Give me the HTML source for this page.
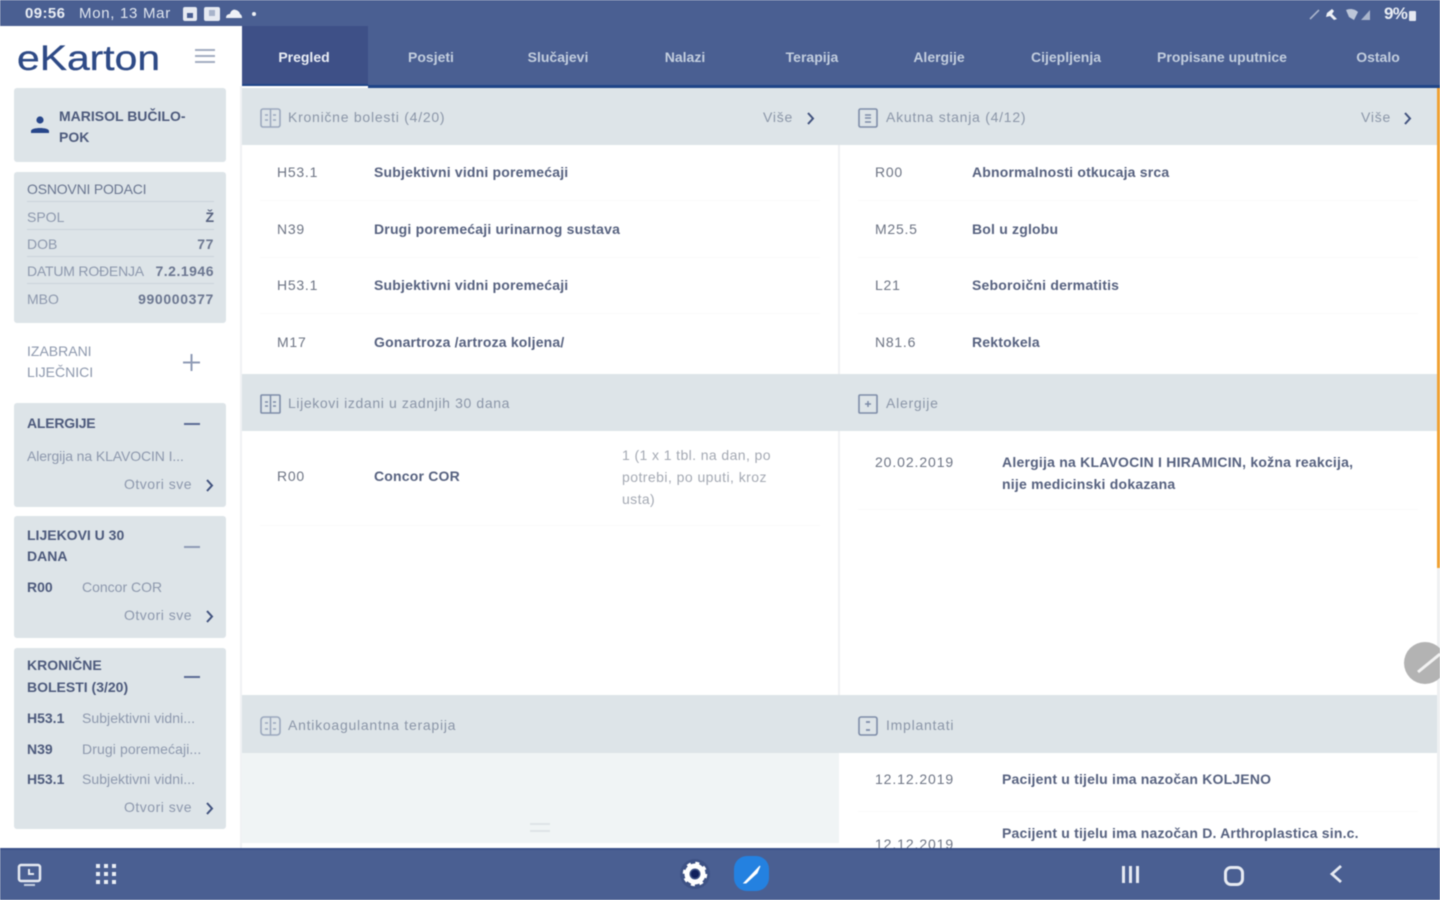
<!DOCTYPE html>
<html lang="hr"><head><meta charset="utf-8"><title>eKarton</title>
<style>
html,body{margin:0;padding:0;width:1440px;height:900px;overflow:hidden;background:#fff}
#p{position:relative;width:1440px;height:900px;overflow:hidden;font-family:"Liberation Sans",sans-serif;filter:blur(.65px);color:#3f4c6e}
#p>*{position:absolute}
.t{white-space:nowrap;font-size:14px;line-height:22px;height:22px}
.g{color:#8d98ad}
.b{font-weight:700;color:#4d5a7c}
.d{font-weight:700;color:#56617f;font-size:14px;letter-spacing:.19px}
.c{color:#6d7484;font-size:14px;letter-spacing:.75px}
.h{color:#8b96a8;font-size:14px;letter-spacing:.75px}
.tab{color:#c3cede;font-size:14px;font-weight:700;text-align:center}
.pn{background:#dde4e8}
.l{height:1px;background:#cbd3da}
.f{height:1px;background:#fafafb}
svg{overflow:visible}
</style></head><body><div id="p">
<!-- top -->
<div style="left:0;top:0;width:1440px;height:26px;background:#4a5f92"></div>
<div style="left:242px;top:26px;width:1198px;height:60px;background:#4a5f92"></div>
<div style="left:242px;top:26px;width:126px;height:58px;background:#3e5087"></div>
<div style="left:242px;top:84px;width:126px;height:2px;background:#1f4588"></div>
<div style="left:368px;top:85px;width:1072px;height:3px;background:#1f4588"></div>
<div class="t" style="left:25px;top:3px;color:#e9edf4;font-size:15px;font-weight:700;letter-spacing:.4px">09:56</div>
<div class="t" style="left:79px;top:3px;color:#dfe5ef;font-size:15px;letter-spacing:.7px">Mon, 13 Mar</div>
<div style="left:183px;top:7px;width:14px;height:14px;background:#e6eaf2;border-radius:2px"></div>
<div style="left:187px;top:13px;width:6px;height:5px;background:#4a5f92"></div>
<div style="left:204px;top:7px;width:16px;height:14px;background:#e6eaf2;border-radius:2px"></div>
<div style="left:209px;top:10px;width:6px;height:6px;background:#a8b4cb"></div>
<svg style="left:225px;top:7px" width="18" height="12"><path d="M1 11C1 8 3 7 5 7 6 3 9 2 11 3 14 4 15 6 15 7 17 8 17 10 17 11Z" fill="#eef1f6"/></svg>
<div style="left:252px;top:12px;width:4px;height:4px;border-radius:50%;background:#eef1f6"></div>
<svg style="left:1308px;top:6px" width="110" height="16">
<path d="M2 13 11 4" stroke="#a9b4cb" stroke-width="1.6"/>
<path d="M19 7 24 3 26 5 24 8 29 13 26 14 22 10 18 11Z" fill="#eef1f6"/>
<path d="M38 4C42 2 47 3 50 6L46 14 41 11Z" fill="#bcc6d8"/>
<path d="M53 14 62 4V14Z" fill="#a9b4cb"/>
<rect x="101" y="5" width="7" height="10" rx="1" fill="#e5e9f1"/>
</svg>
<div class="t" style="left:1384px;top:3px;color:#e9edf4;font-size:17px;font-weight:700;letter-spacing:-.7px">9%</div>
<!-- tabs -->
<div class="t tab" style="left:242px;top:46px;width:124px;color:#e9edf4">Pregled</div>
<div class="t tab" style="left:368px;top:46px;width:126px">Posjeti</div>
<div class="t tab" style="left:495px;top:46px;width:126px">Slučajevi</div>
<div class="t tab" style="left:622px;top:46px;width:126px">Nalazi</div>
<div class="t tab" style="left:749px;top:46px;width:126px">Terapija</div>
<div class="t tab" style="left:876px;top:46px;width:126px">Alergije</div>
<div class="t tab" style="left:1003px;top:46px;width:126px">Cijepljenja</div>
<div class="t tab" style="left:1132px;top:46px;width:180px">Propisane uputnice</div>
<div class="t tab" style="left:1315px;top:46px;width:126px">Ostalo</div>
<!-- sidebar -->
<div style="left:240px;top:86px;width:2px;height:762px;background:#f0f2f4"></div>
<div style="left:17px;top:35px;font-size:35px;line-height:48px;color:#2e4a86;white-space:nowrap;transform:scaleX(1.167);transform-origin:0 50%;-webkit-text-stroke:.3px #2e4a86">eKarton</div>
<div style="left:195px;top:49px;width:20px;height:2px;background:#a3aec2"></div>
<div style="left:195px;top:55px;width:20px;height:2px;background:#a3aec2"></div>
<div style="left:195px;top:61px;width:20px;height:2px;background:#a3aec2"></div>

<div class="pn" style="left:14px;top:88px;width:212px;height:74px;border-radius:3px"></div>
<svg style="left:30px;top:115px" width="20" height="20"><circle cx="10" cy="5" r="3.6" fill="#27468a"/><path d="M1 18V16C1 12 19 12 19 16V18Z" fill="#27468a"/></svg>
<div class="t b" style="left:59px;top:105px">MARISOL BUČILO-</div>
<div class="t b" style="left:59px;top:126px">POK</div>

<div class="pn" style="left:14px;top:172px;width:212px;height:151px;border-radius:3px"></div>
<div class="t" style="left:27px;top:178px;color:#6a7690;letter-spacing:-.2px">OSNOVNI PODACI</div>
<div class="l" style="left:27px;top:201px;width:187px"></div>
<div class="t g" style="left:27px;top:206px">SPOL</div><div class="t" style="right:1226px;top:206px;color:#56617f;font-weight:700">Ž</div>
<div class="l" style="left:27px;top:229px;width:187px"></div>
<div class="t g" style="left:27px;top:233px">DOB</div><div class="t" style="right:1226px;top:233px;color:#6b7690;font-weight:700;letter-spacing:.6px">77</div>
<div class="l" style="left:27px;top:256px;width:187px"></div>
<div class="t g" style="left:27px;top:260px;letter-spacing:-.2px">DATUM ROĐENJA</div><div class="t" style="right:1226px;top:260px;color:#6b7690;font-weight:700;letter-spacing:.5px">7.2.1946</div>
<div class="l" style="left:27px;top:283px;width:187px"></div>
<div class="t g" style="left:27px;top:288px">MBO</div><div class="t" style="right:1226px;top:288px;color:#6b7690;font-weight:700;letter-spacing:.65px">990000377</div>

<div class="t g" style="left:27px;top:340px">IZABRANI</div>
<div class="t g" style="left:27px;top:361px">LIJEČNICI</div>
<svg style="left:183px;top:354px" width="17" height="17"><path d="M0 8.500H17M8.500 0V17" stroke="#8f9bb5" stroke-width="2"/></svg>

<div class="pn" style="left:14px;top:403px;width:212px;height:104px;border-radius:3px"></div>
<div class="t b" style="left:27px;top:412px;letter-spacing:-.2px">ALERGIJE</div>
<div style="left:184px;top:423px;width:16px;height:2px;background:#5a6b94"></div>
<div class="t g" style="left:27px;top:445px;letter-spacing:-.1px">Alergija na KLAVOCIN I...</div>
<div class="t g" style="left:124px;top:473px;letter-spacing:.5px">Otvori sve</div>
<svg class="ch" style="left:205px;top:479px" width="9" height="13"><path d="M2 1 7 6.500 2 12" fill="none" stroke="#41527e" stroke-width="2"/></svg>

<div class="pn" style="left:14px;top:516px;width:212px;height:122px;border-radius:3px"></div>
<div class="t b" style="left:27px;top:524px">LIJEKOVI U 30</div>
<div class="t b" style="left:27px;top:545px">DANA</div>
<div style="left:184px;top:546px;width:16px;height:2px;background:#8f9bb5"></div>
<div class="t b" style="left:27px;top:576px">R00</div>
<div class="t g" style="left:82px;top:576px">Concor COR</div>
<div class="t g" style="left:124px;top:604px;letter-spacing:.5px">Otvori sve</div>
<svg style="left:205px;top:610px" width="9" height="13"><path d="M2 1 7 6.500 2 12" fill="none" stroke="#41527e" stroke-width="2"/></svg>

<div class="pn" style="left:14px;top:648px;width:212px;height:181px;border-radius:3px"></div>
<div class="t b" style="left:27px;top:654px">KRONIČNE</div>
<div class="t b" style="left:27px;top:676px">BOLESTI (3/20)</div>
<div style="left:184px;top:676px;width:16px;height:2px;background:#5a6b94"></div>
<div class="t b" style="left:27px;top:707px">H53.1</div><div class="t g" style="left:82px;top:707px;letter-spacing:.05px">Subjektivni vidni...</div>
<div class="t b" style="left:27px;top:738px">N39</div><div class="t g" style="left:82px;top:738px;letter-spacing:.1px">Drugi poremećaji...</div>
<div class="t b" style="left:27px;top:768px">H53.1</div><div class="t g" style="left:82px;top:768px;letter-spacing:.05px">Subjektivni vidni...</div>
<div class="t g" style="left:124px;top:796px;letter-spacing:.5px">Otvori sve</div>
<svg style="left:205px;top:802px" width="9" height="13"><path d="M2 1 7 6.500 2 12" fill="none" stroke="#41527e" stroke-width="2"/></svg>

<!-- section bars -->
<div class="pn" style="left:242px;top:88px;width:1195px;height:57px"></div>
<div class="pn" style="left:242px;top:374px;width:1195px;height:57px"></div>
<div class="pn" style="left:242px;top:695px;width:1195px;height:58px"></div>
<div style="left:242px;top:753px;width:597px;height:90px;background:#f0f4f5"></div>
<div style="left:838px;top:145px;width:2px;height:229px;background:#f0f2f4"></div>
<div style="left:838px;top:431px;width:2px;height:264px;background:#f0f2f4"></div>
<div style="left:1437px;top:88px;width:3px;height:480px;background:#f0a132"></div>
<div style="left:1437px;top:568px;width:3px;height:280px;background:#eef0f2"></div>

<svg style="left:260px;top:108px" width="21" height="20"><rect x="1" y="1" width="19" height="18" rx="2" fill="none" stroke="#9ba8bd" stroke-width="1.6"/><path d="M10.500 1V19M5 7H8M13 7H16M5 12H8M13 12H16" stroke="#9ba8bd" stroke-width="1.5"/></svg>
<div class="t h" style="left:288px;top:106px">Kronične bolesti (4/20)</div>
<div class="t h" style="left:763px;top:106px">Više</div>
<svg style="left:806px;top:112px" width="9" height="13"><path d="M2 1 7 6.500 2 12" fill="none" stroke="#41527e" stroke-width="2"/></svg>
<svg style="left:858px;top:108px" width="20" height="20"><rect x="1" y="1" width="18" height="18" rx="1.500" fill="none" stroke="#7d8ca8" stroke-width="1.6"/><path d="M7 7H13M7 10H13M7 14H13" stroke="#7d8ca8" stroke-width="1.500"/></svg>
<div class="t h" style="left:886px;top:106px">Akutna stanja (4/12)</div>
<div class="t h" style="left:1361px;top:106px">Više</div>
<svg style="left:1403px;top:112px" width="9" height="13"><path d="M2 1 7 6.500 2 12" fill="none" stroke="#41527e" stroke-width="2"/></svg>

<svg style="left:260px;top:394px" width="21" height="20"><rect x="1" y="1" width="19" height="18" rx="1" fill="none" stroke="#7d8ca8" stroke-width="1.600"/><path d="M10.500 1V19M5 8H8M13 8H16M5 12H8M13 12H16" stroke="#7d8ca8" stroke-width="1.500"/></svg>
<div class="t h" style="left:288px;top:392px;letter-spacing:.62px">Lijekovi izdani u zadnjih 30 dana</div>
<svg style="left:858px;top:394px" width="20" height="20"><rect x="1" y="1" width="18" height="18" rx="1" fill="none" stroke="#7d8ca8" stroke-width="1.600"/><path d="M7 10H13M10 7V13" stroke="#7d8ca8" stroke-width="1.500"/></svg>
<div class="t h" style="left:886px;top:392px">Alergije</div>

<svg style="left:260px;top:716px" width="21" height="20"><rect x="1" y="1" width="19" height="18" rx="3" fill="none" stroke="#9ba8bd" stroke-width="1.600"/><path d="M10.500 1V19M5 7H8M13 7H16M5 13H8M13 13H16" stroke="#9ba8bd" stroke-width="1.500"/></svg>
<div class="t h" style="left:288px;top:714px">Antikoagulantna terapija</div>
<svg style="left:858px;top:716px" width="20" height="20"><rect x="1" y="1" width="18" height="18" rx="2" fill="none" stroke="#7d8ca8" stroke-width="1.600"/><path d="M8 6H12M8 14H12" stroke="#7d8ca8" stroke-width="1.800"/></svg>
<div class="t h" style="left:886px;top:714px">Implantati</div>

<!-- left rows -->
<div class="t c" style="left:277px;top:161px">H53.1</div><div class="t d" style="left:374px;top:161px">Subjektivni vidni poremećaji</div>
<div class="f" style="left:260px;top:200px;width:560px"></div>
<div class="t c" style="left:277px;top:218px">N39</div><div class="t d" style="left:374px;top:218px">Drugi poremećaji urinarnog sustava</div>
<div class="f" style="left:260px;top:257px;width:560px"></div>
<div class="t c" style="left:277px;top:274px">H53.1</div><div class="t d" style="left:374px;top:274px">Subjektivni vidni poremećaji</div>
<div class="f" style="left:260px;top:313px;width:560px"></div>
<div class="t c" style="left:277px;top:331px">M17</div><div class="t d" style="left:374px;top:331px">Gonartroza /artroza koljena/</div>
<div class="t c" style="left:277px;top:465px">R00</div><div class="t d" style="left:374px;top:465px">Concor COR</div>
<div class="t" style="left:622px;top:444px;color:#a4a9b3;letter-spacing:.4px">1 (1 x 1 tbl. na dan, po</div>
<div class="t" style="left:622px;top:466px;color:#a4a9b3;letter-spacing:.45px">potrebi, po uputi, kroz</div>
<div class="t" style="left:622px;top:488px;color:#a4a9b3;letter-spacing:.4px">usta)</div>
<div class="f" style="left:260px;top:525px;width:560px"></div>

<!-- right rows -->
<div class="t c" style="left:875px;top:161px">R00</div><div class="t d" style="left:972px;top:161px">Abnormalnosti otkucaja srca</div>
<div class="f" style="left:858px;top:200px;width:560px"></div>
<div class="t c" style="left:875px;top:218px">M25.5</div><div class="t d" style="left:972px;top:218px">Bol u zglobu</div>
<div class="f" style="left:858px;top:257px;width:560px"></div>
<div class="t c" style="left:875px;top:274px">L21</div><div class="t d" style="left:972px;top:274px">Seboroični dermatitis</div>
<div class="f" style="left:858px;top:313px;width:560px"></div>
<div class="t c" style="left:875px;top:331px">N81.6</div><div class="t d" style="left:972px;top:331px">Rektokela</div>
<div class="t c" style="left:875px;top:451px;letter-spacing:.9px">20.02.2019</div>
<div class="t d" style="left:1002px;top:451px;letter-spacing:.22px">Alergija na KLAVOCIN I HIRAMICIN, kožna reakcija,</div>
<div class="t d" style="left:1002px;top:473px;letter-spacing:.22px">nije medicinski dokazana</div>
<div class="f" style="left:858px;top:509px;width:560px"></div>
<div class="t c" style="left:875px;top:768px;letter-spacing:.9px">12.12.2019</div>
<div class="t d" style="left:1002px;top:768px">Pacijent u tijelu ima nazočan KOLJENO</div>
<div class="f" style="left:858px;top:811px;width:560px"></div>
<div class="t c" style="left:875px;top:833px;letter-spacing:.9px">12.12.2019</div>
<div class="t d" style="left:1002px;top:822px">Pacijent u tijelu ima nazočan D. Arthroplastica sin.c.</div>

<!-- grip -->
<div style="left:530px;top:823px;width:20px;height:2px;background:#dfe4e7"></div>
<div style="left:530px;top:830px;width:20px;height:2px;background:#dfe4e7"></div>
<!-- floating -->
<div style="left:1404px;top:642px;width:42px;height:42px;border-radius:50%;background:#b3b3b3"></div>
<svg style="left:1416px;top:650px" width="24" height="26"><path d="M2 22 24 4" stroke="#f2f2f2" stroke-width="3"/></svg>
<!-- bottom bar -->
<div style="left:0;top:848px;width:1440px;height:52px;background:#4a5f92"></div>
<div style="left:0;top:848px;width:1440px;height:2px;background:#3b5189"></div>
<svg style="left:17px;top:863px" width="25" height="25"><rect x="2" y="2" width="21" height="16" rx="2" fill="none" stroke="#e6eaf2" stroke-width="2.500"/><path d="M12 6V11H17" fill="none" stroke="#e6eaf2" stroke-width="2"/><path d="M7 22H18" stroke="#c6d0e0" stroke-width="2"/></svg>
<svg style="left:96px;top:864px" width="21" height="21" fill="#e9edf4"><rect width="4" height="4" x="0" y="0"/><rect width="4" height="4" x="8" y="0"/><rect width="4" height="4" x="16" y="0"/><rect width="4" height="4" x="0" y="8"/><rect width="4" height="4" x="8" y="8"/><rect width="4" height="4" x="16" y="8"/><rect width="4" height="4" x="0" y="16"/><rect width="4" height="4" x="8" y="16"/><rect width="4" height="4" x="16" y="16"/></svg>
<svg style="left:679px;top:858px" width="32" height="32"><circle cx="16" cy="16" r="15" fill="#3e5285"/><circle cx="16" cy="16" r="8" fill="none" stroke="#fff" stroke-width="5"/><circle cx="16" cy="16" r="11" fill="none" stroke="#fff" stroke-width="2.500" stroke-dasharray="4 4.640"/><circle cx="16" cy="16" r="4" fill="#10205c"/></svg>
<div style="left:734px;top:856px;width:35px;height:35px;border-radius:13px;background:#2481e0"></div>
<svg style="left:741px;top:863px" width="22" height="22"><path d="M3 20 19 3 16 10 5 20Z" fill="#fff" stroke="#fff" stroke-width="1"/></svg>
<div style="left:1122px;top:866px;width:3px;height:17px;background:#e6eaf2"></div>
<div style="left:1129px;top:866px;width:3px;height:17px;background:#e6eaf2"></div>
<div style="left:1136px;top:866px;width:3px;height:17px;background:#e6eaf2"></div>
<div style="left:1224px;top:866px;width:14px;height:14px;border:3px solid #e6eaf2;border-radius:7px"></div>
<svg style="left:1329px;top:864px" width="14" height="20"><path d="M12 2 3 10 12 18" fill="none" stroke="#e6eaf2" stroke-width="2.800"/></svg>
</div></body></html>
